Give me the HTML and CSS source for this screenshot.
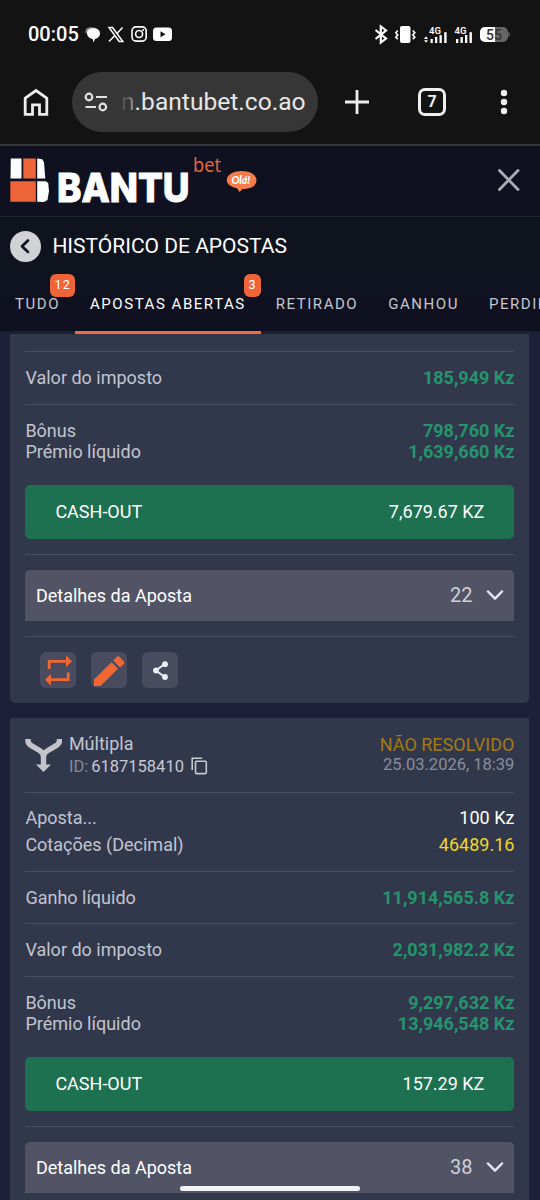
FILE: index.html
```html
<!DOCTYPE html>
<html lang="pt">
<head>
<meta charset="utf-8">
<title>Histórico de apostas</title>
<link rel="stylesheet" href="styles.css">
</head>
<body>
<div class="phone">
  <div class="status">
    <span class="clock">00:05</span>
    <svg class="notif" width="90" height="28" viewBox="84 20 90 28">
      <path d="M85.500 33.500c-.7-4.500 1.500-6.500 6-6.300l5 .8-6 3z" fill="#888"/>
      <path d="M87 33.300c0-3 2.500-5 6.500-5s6.500 2 6.500 5.300c0 2.700-2 4.900-5 5.300L93.500 42.500l-.8-3.500c-3.300-.5-5.700-2.700-5.700-5.700z" fill="#fff"/>
      <path d="M109 27.500h3.600l10.200 14h-3.600zM122.500 27.500L117 33.500M114.600 35.800L109 41.500" fill="none" stroke="#fff" stroke-width="1.5"/>
      <rect x="132" y="26.900" width="14.200" height="14.200" rx="4" fill="none" stroke="#fff" stroke-width="1.600"/>
      <circle cx="139.100" cy="34" r="3.500" fill="none" stroke="#fff" stroke-width="1.600"/>
      <circle cx="143.200" cy="29.900" r="1" fill="#fff"/>
      <rect x="153" y="27.500" width="19" height="13.500" rx="3.500" fill="#fff"/>
      <path d="M160.500 31.200l5 3-5 3z" fill="#131313"/>
    </svg>
    <svg class="system" width="140" height="28" viewBox="372 20 140 28">
      <path d="M375.500 30l10.500 8.500-5.200 4V26.500l5.200 4-10.500 8.500" fill="none" stroke="#fff" stroke-width="2.200"/>
      <rect x="400" y="26" width="10.500" height="17" rx="2" fill="#fff"/>
      <path d="M397.800 30.500l-2 2.200 2 2.200-2 2.200 2 2M412.800 30.500l2 2.200-2 2.200 2 2.200-2 2" fill="none" stroke="#fff" stroke-width="1.600"/>
      <g fill="#fff">
        <path d="M424 39l2-2.800 2 2.800zM424 40.200h4l-2 2.600z"/>
        <rect x="430.500" y="39" width="2.300" height="4"/><rect x="435" y="37" width="2.300" height="6"/>
        <rect x="439.500" y="35" width="2.300" height="8"/><rect x="444.200" y="32.200" width="2.400" height="10.800"/>
        <rect x="456" y="39" width="2.300" height="4"/><rect x="460.500" y="37" width="2.300" height="6"/>
        <rect x="465" y="35" width="2.300" height="8"/><rect x="469.500" y="32.200" width="2.400" height="10.800"/>
        <text class="net" x="429" y="33.500">4G</text>
        <text class="net" x="454.500" y="33.500">4G</text>
      </g>
      <rect x="480" y="27" width="28" height="15" rx="5" fill="#666"/>
      <path d="M485 27h10v15h-10a5 5 0 0 1-5-5v-5a5 5 0 0 1 5-5z" fill="#fff"/>
      <path d="M509 32.500v4" stroke="#666" stroke-width="1.500"/>
      <text class="batt" x="486" y="39.500">55</text>
    </svg>
  </div>

  <div class="toolbar">
    <svg class="home" width="28" height="30" viewBox="22 87 28 30"><path d="M25.200 98.200L36 90.500l10.800 7.700v16.200h-7.300v-9.500h-7v9.500h-7.300z" fill="none" stroke="#eee" stroke-width="2.800"/></svg>
    <div class="url">
      <svg width="24" height="20" viewBox="84 92 24 20"><g fill="none" stroke="#e2e2e2" stroke-width="2.200"><circle cx="89" cy="97" r="3.300"/><path d="M96 97h11M85.500 107h10.500"/><circle cx="102.800" cy="107" r="3.300"/></g></svg>
      <span class="address"><span class="fade">n</span>.bantubet.co.ao</span>
    </div>
    <svg class="plus" width="26" height="26" viewBox="344 89 26 26"><path d="M345 102h24M357 90v24" stroke="#eee" stroke-width="2.800"/></svg>
    <div class="tabcount">7</div>
    <svg class="more" width="8" height="28" viewBox="500 88 8 28"><g fill="#eee"><circle cx="504" cy="93" r="3.200"/><circle cx="504" cy="102" r="3.200"/><circle cx="504" cy="111" r="3.200"/></g></svg>
  </div>

  <header class="site">
    <svg class="logo" width="250" height="56" viewBox="10 152 250 56">
      <path d="M10.800 158.500h10.700v20H10.500z" fill="#fff"/>
      <path d="M23.300 158.500h12.500v20H23.300zM10.300 181.200h25.500v20.500H10.300z" fill="#ee653a"/>
      <path d="M37.200 158.500l5 .8 1.800 3 1.300 16.200h-8.100zM37.200 181.200h8.500l2.500 1.800.8 8-1.500 9-3.500 2-6.800-.3z" fill="#fff"/>
      <text class="brand" x="57" y="201.500" textLength="132.500" lengthAdjust="spacingAndGlyphs">BANTU</text>
      <text class="bet" x="193" y="171.500" textLength="28" lengthAdjust="spacingAndGlyphs">bet</text>
      <path d="M241.500 171c9 0 15 4 15 9.300s-5 8.700-14 8.700l-3 3-2.500-3.700c-6-1.200-10.200-4-10.200-8 0-5.300 6-9.300 14.700-9.300z" fill="#f67d4a"/>
      <text class="ola" x="231.500" y="184" textLength="18.500">Olá!</text>
    </svg>
    <svg class="close" width="22" height="22" viewBox="498 169.500 22 22"><path d="M499.500 171l18.500 19M518 171l-18.500 19" stroke="#a9abb5" stroke-width="2.900" stroke-linecap="round"/></svg>
  </header>

  <div class="title">
    <span class="back"><svg width="31" height="31" viewBox="0 0 31 31"><path d="M18 9.500l-6 5.700 6 5.700" fill="none" stroke="#10131f" stroke-width="2.700" stroke-linecap="round" stroke-linejoin="round"/></svg></span>
    <h1>HISTÓRICO DE APOSTAS</h1>
  </div>

  <nav class="tabs">
    <span class="tab">TUDO<b>12</b></span>
    <span class="tab active">APOSTAS ABERTAS<b>3</b></span>
    <span class="tab">RETIRADO</span>
    <span class="tab">GANHOU</span>
    <span class="tab">PERDIDO</span>
  </nav>

  <main>
    <section class="card first">
      <div class="row single"><span>Valor do imposto</span><strong>185,949 Kz</strong></div>
      <div class="row pair">
        <div><span>Bônus</span><strong>798,760 Kz</strong></div>
        <div><span>Prémio líquido</span><strong>1,639,660 Kz</strong></div>
      </div>
      <div class="cashout"><span>CASH-OUT</span><span>7,679.67 KZ</span></div>
      <div class="row holder"><div class="details"><span>Detalhes da Aposta</span><em>22</em><svg width="18" height="11" viewBox="0 0 18 11"><path d="M2 1.500l7 7.200 7-7.200" fill="none" stroke="#e4e5ee" stroke-width="2.500" stroke-linecap="round" stroke-linejoin="round"/></svg></div></div>
      <div class="row actions">
        <span class="action"><svg width="36" height="36" viewBox="40 652 36 36"><path d="M49.200 669v-7.700H67M68.200 672.500v7.200H50" fill="none" stroke="#f26633" stroke-width="2.800"/><path d="M66 655.500l6 5.800-6 5.700zM51 674l-6 5.700 6 5.800z" fill="#f26633"/></svg></span>
        <span class="action"><svg width="36" height="36" viewBox="91 652 36 36"><path d="M94 679.500l17.500-17.200 6.500 6.500L100.500 686H94zM113.200 660.500l3.500-3.700q1.300-1.200 2.700 0l4.600 4.700q1 1.300-.1 2.400l-3.800 3.500z" fill="#f26633"/></svg></span>
        <span class="action"><svg width="36" height="36" viewBox="142 652 36 36"><path d="M164.800 664l-9 6.500 9 6.500" fill="none" stroke="#eeeef5" stroke-width="1.900"/><g fill="#eeeef5"><circle cx="165" cy="664.200" r="2.900"/><circle cx="156" cy="670.500" r="2.900"/><circle cx="165" cy="677" r="2.900"/></g></svg></span>
      </div>
    </section>

    <section class="card second">
      <div class="bethead">
        <svg class="merge" width="37" height="35" viewBox="25 738 37 35"><path d="M28 739v1.500q0 3 2.500 4.600l9.500 5.700q3.500 2.300 3.500 6.200v9M59.500 739v1.500q0 3-2.500 4.600l-9.500 5.700q-4 2.300-4 6.200" fill="none" stroke="#c3c4ca" stroke-width="5.400"/><path d="M36 764.500h15L43.500 772z" fill="#c3c4ca"/></svg>
        <div class="ident"><div>Múltipla</div><div class="id"><i>ID:</i> 6187158410<svg width="17" height="18" viewBox="0 0 17 18"><path d="M1.200 13V1.200h10" fill="none" stroke="#c7c8d3" stroke-width="1.600"/><rect x="4.500" y="4.300" width="10.800" height="12.300" rx="1" fill="none" stroke="#c7c8d3" stroke-width="1.600"/></svg></div></div>
        <div class="state"><div class="pending">NÃO RESOLVIDO</div><div class="date">25.03.2026, 18:39</div></div>
      </div>
      <div class="row stake">
        <div><span>Aposta...</span><span class="white">100 Kz</span></div>
        <div><span>Cotações (Decimal)</span><span class="yellow">46489.16</span></div>
      </div>
      <div class="row single"><span>Ganho líquido</span><strong>11,914,565.8 Kz</strong></div>
      <div class="row single"><span>Valor do imposto</span><strong>2,031,982.2 Kz</strong></div>
      <div class="row pair">
        <div><span>Bônus</span><strong>9,297,632 Kz</strong></div>
        <div><span>Prémio líquido</span><strong>13,946,548 Kz</strong></div>
      </div>
      <div class="cashout"><span>CASH-OUT</span><span>157.29 KZ</span></div>
      <div class="row holder"><div class="details"><span>Detalhes da Aposta</span><em>38</em><svg width="18" height="11" viewBox="0 0 18 11"><path d="M2 1.500l7 7.200 7-7.200" fill="none" stroke="#e4e5ee" stroke-width="2.500" stroke-linecap="round" stroke-linejoin="round"/></svg></div></div>
    </section>
  </main>
  <div class="gesture"></div>
</div>
</body>
</html>
```
FILE: styles.css
```css
* { box-sizing: border-box; }
body { margin: 0; background: #1c2038; font-family: Roboto, sans-serif; font-size: 18px; }
svg { display: block; flex: none; }
.phone { position: relative; width: 540px; height: 1200px; overflow: hidden; }

.status { height: 68px; background: #131313; display: flex; align-items: center; padding: 0 28px; color: #fff; }
.clock { width: 56px; font-size: 20px; font-weight: 500; line-height: 28px; white-space: nowrap; }
.system { margin-left: auto; }
.net { font: 600 9.500px Roboto, sans-serif; }
.batt { font: 500 14px Roboto, sans-serif; fill: #333; }

.toolbar { height: 76px; background: #131313; display: flex; align-items: center; padding: 0 32px 8px 22px; color: #eee; }
.url { display: flex; align-items: center; width: 246px; height: 60px; margin-left: 22px; padding-left: 12px; border-radius: 30px; background: #363636; }
.address { margin-left: 13px; font-size: 24.600px; line-height: 30px; color: #e6e6e6; white-space: nowrap; }
.fade { background: linear-gradient(90deg, #444, #999); -webkit-background-clip: text; background-clip: text; color: transparent; }
.plus { margin-left: 26px; }
.tabcount { width: 28px; height: 28px; margin-left: 48px; border: 3px solid #eee; border-radius: 7px; font-size: 16px; font-weight: 700; line-height: 22px; text-align: center; }
.more { margin-left: auto; }

.site { height: 73px; display: flex; justify-content: space-between; padding: 6px 20px 0 10px; background: #0f1120; border-top: 2px solid #37383c; border-bottom: 1px solid #1b212b; }
.close { margin-top: 17px; }
.brand { font: 800 40px Inter, Roboto, sans-serif; fill: #fff; stroke: #fff; stroke-width: 1; }
.bet { font: 400 20px "Open Sans", sans-serif; fill: #e9683f; }
.ola { font: italic 900 10.500px Lato, sans-serif; fill: #fff; }

.title { height: 57px; display: flex; align-items: center; padding: 1px 0 0 10px; background: #0e131e; color: #fff; }
.back { width: 31px; height: 31px; border-radius: 50%; background: #d1d1d6; }
.title h1 { margin: 0 0 0 11.400px; font-size: 21px; font-weight: 400; line-height: 26px; white-space: nowrap; }

.tabs { height: 60px; display: flex; overflow: hidden; background: linear-gradient(#0e121e, #0f1120 40%, #0f1120 95%, #1b2131 96%); }
.tab { position: relative; flex: none; height: 60px; padding: 20px 15px 0; font-size: 15px; line-height: 20px; letter-spacing: 1.540px; color: #c5c6ce; white-space: nowrap; }
.tab.active { color: #fff; border-bottom: 3px solid #f26a3d; }
.tab b { position: absolute; top: 0; right: 0; height: 23px; padding: 0 4px 0 5px; border-radius: 6px; background: #ee653a; color: #fff; font-size: 12.500px; font-weight: 400; line-height: 22px; letter-spacing: 1.200px; }

main { color: #c2c4d0; }
.card { width: 519px; margin-left: 10.400px; padding: 0 15px; background: #32384b; }
.first { height: 369px; padding-top: 17px; border-radius: 0 0 5px 5px; }
.second { height: 482px; margin-top: 15px; border-radius: 0; overflow: hidden; }
.row { border-top: 1.500px solid #4a5063; line-height: 21px; }
.row strong { color: #25946d; font-weight: 700; }
.single { display: flex; justify-content: space-between; height: 52.500px; padding-top: 15px; }
.pair { height: 81px; padding-top: 15px; }
.pair > div, .stake > div { display: flex; justify-content: space-between; }
.stake { height: 79px; padding-top: 14.500px; }
.stake > div + div { margin-top: 6px; }
.white { color: #fff; }
.yellow { color: #efd52c; }
.cashout { display: flex; justify-content: space-between; align-items: center; height: 54px; margin-bottom: 15px; padding: 0 30px; border-radius: 5px; background: #1d7151; color: #fff; }
.holder { height: 82.500px; padding-top: 15px; }
.details { display: flex; align-items: center; height: 51px; padding: 0 10px 0 10.500px; border-radius: 5px 5px 0 0; background: #525466; color: #fff; }
.details em { margin-left: auto; margin-right: 14px; color: #cfd0db; font-size: 20px; font-style: normal; }
.actions { display: flex; gap: 15px; padding: 15px 0 0 15px; }
.action { width: 36px; height: 36px; border-radius: 6px; background: #494c5f; }

.bethead { display: flex; height: 73.500px; padding-top: 15px; line-height: 21px; }
.merge { margin-top: 5px; }
.ident { margin-left: 6.500px; }
.id { display: flex; align-items: center; gap: 3px; margin-top: 1.500px; font-size: 16.500px; color: #c7c8d3; }
.id i { color: #85899a; font-style: normal; }
.id svg { margin-left: 4px; }
.state { margin-left: auto; text-align: right; }
.pending { padding-top: 1px; color: #a27a17; }
.date { margin-top: -1px; color: #8a8d9c; font-size: 16.500px; }
.gesture { position: absolute; left: 180px; bottom: 9px; width: 180px; height: 5px; border-radius: 3px; background: #f2f2f6; }
```
